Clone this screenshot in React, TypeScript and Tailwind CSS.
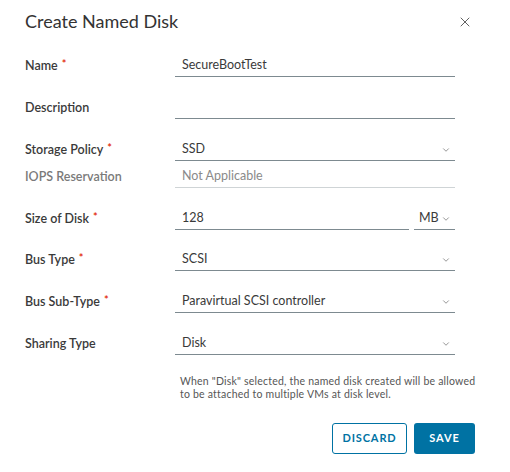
import { X, ChevronDown } from 'lucide-react';

const Req = () => <span className="ml-[4px] text-[#e12200] text-[11px] relative -top-[2px]">*</span>;

const Chevron = () => <ChevronDown className="w-[10px] h-[10px] text-[#565656]" strokeWidth={1.5} />;

const Row = ({ label, required, className = '', children }: { label: string; required?: boolean; className?: string; children: React.ReactNode }) => (
  <div className={`flex items-center h-[22px] ${className}`}>
    <div className="w-[150px] text-[12.5px] font-semibold text-[#3a3a3a]">
      {label}
      {required && <Req />}
    </div>
    {children}
  </div>
);

const Field = ({ value, select, muted }: { value?: string; select?: boolean; muted?: boolean }) => (
  <div className={`w-[280px] h-[22px] flex items-center justify-between pl-[7px] pr-[4px] border-b ${muted ? 'border-[#cfd4d6]' : 'border-[#7d8a90]'}`}>
    <span className={`text-[12.5px] ${muted ? 'text-[#8a8a8a]' : 'text-[#3a3a3a]'}`}>{value}</span>
    {select && <Chevron />}
  </div>
);

const App = () => {
  return (
    <div className="w-[510px] h-[472px] bg-white font-['Lato',sans-serif] text-[#313131]">
      <div className="flex items-center justify-between pl-[25px] pr-[37px] pt-[10px] h-[33px]">
        <h1 className="text-[18px] text-[#333]">Create Named Disk</h1>
        <X className="w-[16px] h-[16px] text-[#555]" strokeWidth={1.4} />
      </div>

      <div className="pl-[25px] pt-[22px]">
        <Row label="Name" required>
          <Field value="SecureBootTest" />
        </Row>
        <Row label="Description" className="mt-[20px]">
          <Field />
        </Row>
        <Row label="Storage Policy" required className="mt-[20px]">
          <Field value="SSD" select />
        </Row>
        <div className="flex items-center h-[22px] mt-[5px]">
          <div className="w-[150px] text-[12.5px] font-semibold text-[#7a7a7a]">IOPS Reservation</div>
          <Field value="Not Applicable" muted />
        </div>
        <Row label="Size of Disk" required className="mt-[20px]">
          <div className="flex gap-[5px]">
            <div className="w-[234px] h-[22px] flex items-center pl-[7px] border-b border-[#7d8a90]">
              <span className="text-[12.5px] text-[#3a3a3a]">128</span>
            </div>
            <div className="w-[41px] h-[22px] flex items-center justify-between pl-[5px] pr-[4px] border-b border-[#7d8a90]">
              <span className="text-[12.5px] text-[#3a3a3a]">MB</span>
              <Chevron />
            </div>
          </div>
        </Row>
        <Row label="Bus Type" required className="mt-[19px]">
          <Field value="SCSI" select />
        </Row>
        <Row label="Bus Sub-Type" required className="mt-[20px]">
          <Field value="Paravirtual SCSI controller" select />
        </Row>
        <Row label="Sharing Type" className="mt-[20px]">
          <Field value="Disk" select />
        </Row>

        <p className="ml-[155px] mt-[20px] w-[305px] text-[10.5px] tracking-[0.02em] leading-[13px] text-[#565656]">
          When "Disk" selected, the named disk created will be allowed to be attached to multiple VMs at disk level.
        </p>
      </div>

      <div className="flex justify-end gap-[7px] pr-[35px] mt-[22px]">
        <button className="w-[75px] h-[31px] rounded-[3px] border border-[#0072a3] text-[#0072a3] text-[11px] font-bold tracking-[0.08em]">
          DISCARD
        </button>
        <button className="w-[61px] h-[31px] rounded-[3px] bg-[#0072a3] text-white text-[11px] font-bold tracking-[0.08em]">
          SAVE
        </button>
      </div>
    </div>
  );
};

export default App;
